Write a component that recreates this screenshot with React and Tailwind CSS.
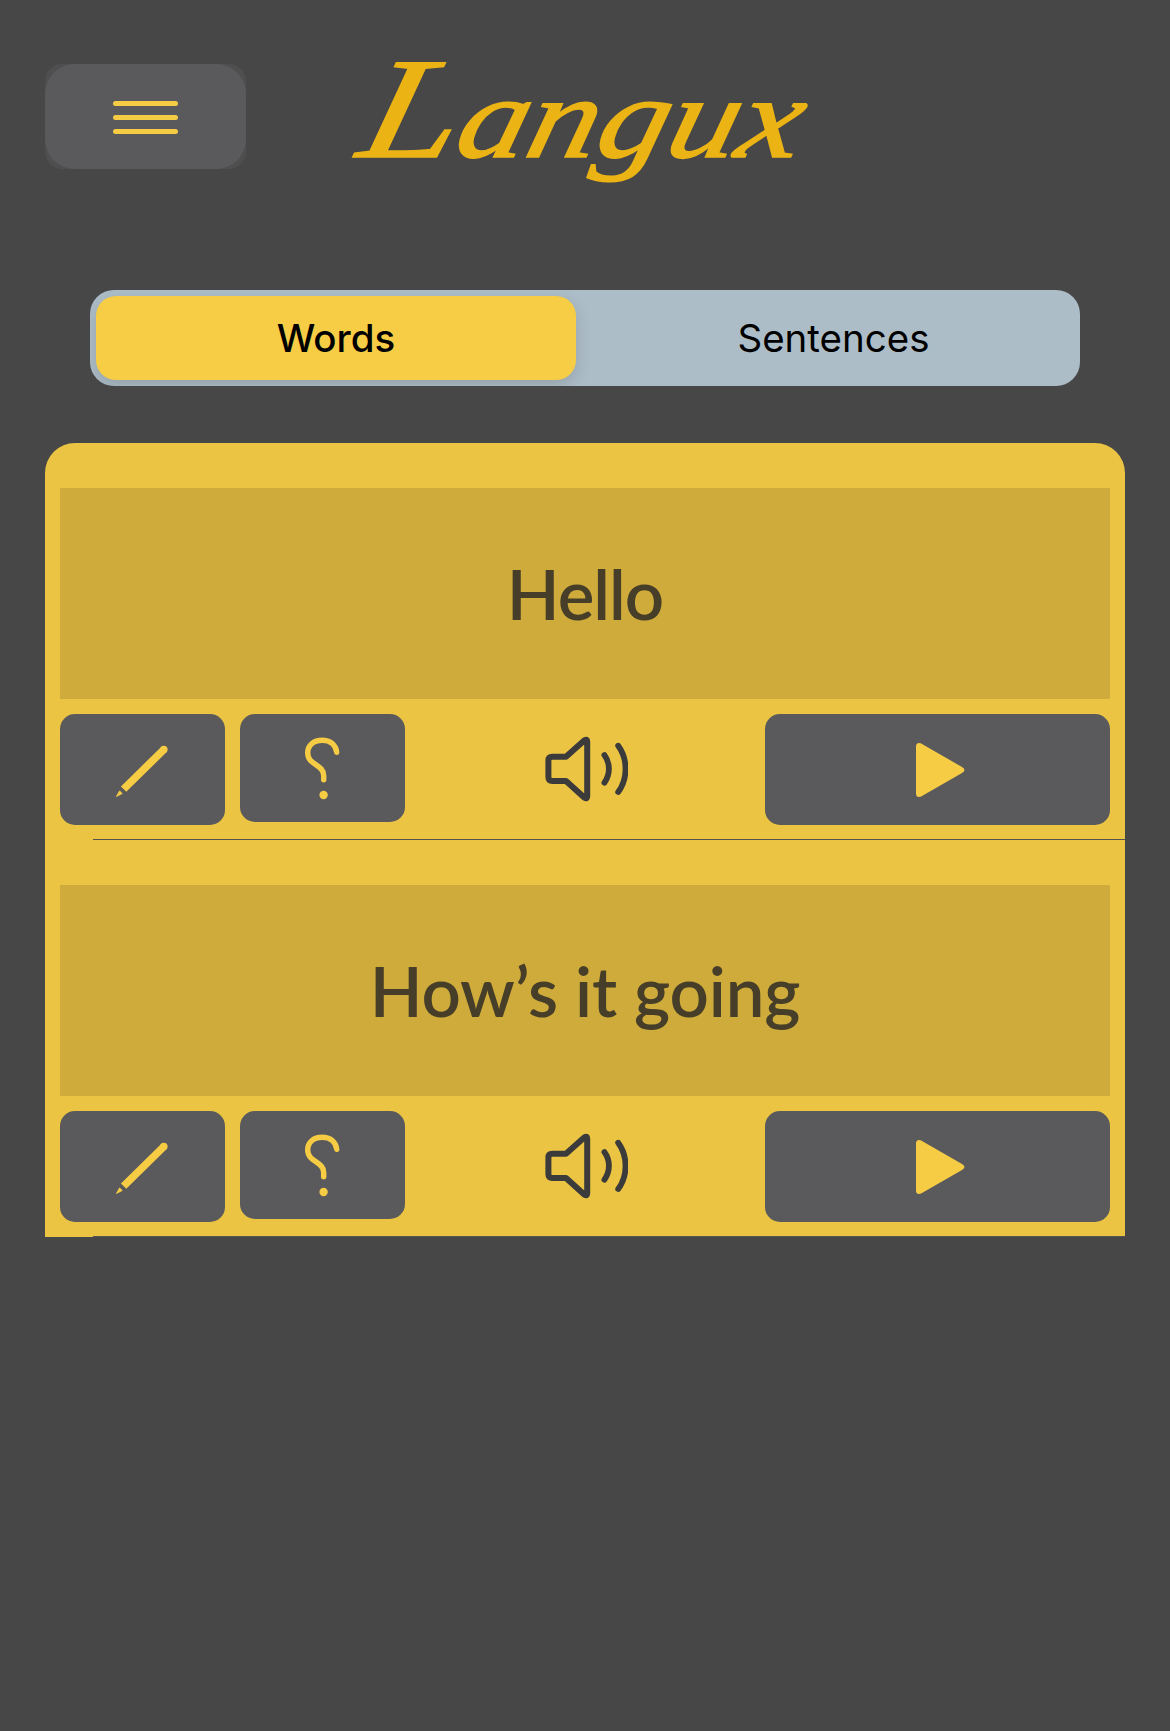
import React from "react";

function PencilIcon() {
  return (
    <svg width="56" height="56" viewBox="0 0 56 56">
      <path d="M8.6 47.1 L48.8 7.6" stroke="#f5cc44" strokeWidth="7.6" fill="none" />
      <circle cx="48.8" cy="7.6" r="3.8" fill="#f5cc44" />
      <path d="M1.4 54.5 L4.6 48.8 L7.2 51.6 Z" fill="#f5cc44" stroke="#f5cc44" strokeWidth="0.8" strokeLinejoin="round" />
    </svg>
  );
}

function QuestionIcon() {
  return (
    <svg width="38" height="64" viewBox="0 0 38 64" className="ml-[1px]">
      <path
        d="M32.7 16.3 C31.8 8.6 26 4.3 18.2 4.3 C9.5 4.3 3.7 9.4 3.7 17 C3.7 29 19.7 28.5 19.7 39.5 V43.7"
        fill="none"
        stroke="#f5cc44"
        strokeWidth="5.4"
        strokeLinecap="round"
      />
      <circle cx="19.6" cy="59" r="4.2" fill="#f5cc44" />
    </svg>
  );
}

function SpeakerIcon() {
  return (
    <svg width="86" height="66" viewBox="0 0 86 66" fill="none" stroke="#3b3b3b" strokeWidth="6" strokeLinecap="round" strokeLinejoin="round">
      <path d="M10.2 20.7 H24 L42.5 4.3 Q45.2 2.6 45.2 5.6 V60.4 Q45.2 63.4 42.5 61.7 L24 45 H10.2 Q6.4 45 6.4 41.2 V24.5 Q6.4 20.7 10.2 20.7 Z" />
      <path d="M62.4 19 C68.4 27 68.4 38.7 62.4 46.7" strokeWidth="5.8" />
      <path d="M76.2 9.7 C86 23 86 43 76.2 56" strokeWidth="5.8" />
    </svg>
  );
}

function PlayIcon() {
  return (
    <svg width="50" height="56" viewBox="0 0 50 56" className="ml-1">
      <path
        d="M1 4.5 Q1 1 4 1 Q5.6 1 7 2 L47 25 Q49.5 26.7 49.5 28 Q49.5 29.3 47 31 L7 54 Q5.6 55 4 55 Q1 55 1 51.5 Z"
        fill="#f5cc44"
      />
    </svg>
  );
}

function PhraseRow({ text, textClass }) {
  return (
    <section className="flex h-[397px] flex-col">
      <div className="mx-[15px] mt-[45px] flex h-[211px] shrink-0 justify-center bg-[#ceab3a] pt-[64px]">
        <p className={"whitespace-nowrap font-['Lato'] text-[69px] font-semibold leading-[84px] text-[#463e28] " + textClass}>{text}</p>
      </div>
      <div className="mx-[15px] mt-[15px] flex h-[111px] shrink-0 items-start">
        <button aria-label="Edit" className="flex h-[111px] w-[165px] items-center justify-center rounded-[15px] bg-[#5a5a5c]">
          <PencilIcon />
        </button>
        <button aria-label="Help" className="ml-[15px] flex h-[108px] w-[165px] items-center justify-center rounded-[15px] bg-[#5a5a5c]">
          <QuestionIcon />
        </button>
        <div className="flex h-[110px] flex-1 items-center justify-center">
          <SpeakerIcon />
        </div>
        <button aria-label="Play" className="flex h-[111px] w-[345px] items-center justify-center rounded-[15px] bg-[#5a5a5c]">
          <PlayIcon />
        </button>
      </div>
      <div className="ml-12 mt-[14px] h-px shrink-0 bg-[#55534c]" />
    </section>
  );
}

export default function App() {
  return (
    <main className="h-[1731px] w-[1170px] overflow-hidden bg-[#474747] px-[45px] pt-10">
      <header className="flex h-[250px] items-start">
        <div className="mt-6 h-[105px] w-[201px] rounded-[17px] bg-[#4f4f50]">
          <button aria-label="Menu" className="flex h-[105px] w-[201px] flex-col items-center justify-center gap-[9.3px] rounded-[30px] bg-[#5a5a5c] pt-[2px]">
            <span className="h-[5px] w-[65px] rounded-full bg-[#f5cc44]" />
            <span className="h-[5px] w-[65px] rounded-full bg-[#f5cc44]" />
            <span className="h-[5px] w-[65px] rounded-full bg-[#f5cc44]" />
          </button>
        </div>
        <h1 className="ml-[94px]">
          <svg width="480" height="180" viewBox="0 0 480 180" className="overflow-visible" fill="#ebb414" stroke="#ebb414" strokeWidth="1.6" fontFamily="'Liberation Serif', serif" fontStyle="italic">
            <text transform="translate(15 117) skewX(-14)" textLength="440" lengthAdjust="spacingAndGlyphs" fontSize="116">
              <tspan fontSize="144">L</tspan>
              <tspan>angux</tspan>
            </text>
          </svg>
        </h1>
      </header>

      <nav className="mx-[45px] flex h-24 overflow-hidden rounded-[24px] bg-[#adbdc7] p-[6px] font-['Inter'] text-[38.5px] leading-[84px] text-black">
        <button className="w-[480px] rounded-[20px] bg-[#f6cd45] font-medium shadow-[0_6px_16px_rgba(0,0,0,0.14)]">Words</button>
        <button className="flex-1 pl-[17px]">Sentences</button>
      </nav>

      <div className="mt-[57px] overflow-hidden rounded-t-[30px] bg-[#ebc443]">
        <PhraseRow text="Hello" textClass="tracking-[-1px]" />
        <PhraseRow text="How’s it going" textClass="tracking-[-0.15px]" />
      </div>
    </main>
  );
}
